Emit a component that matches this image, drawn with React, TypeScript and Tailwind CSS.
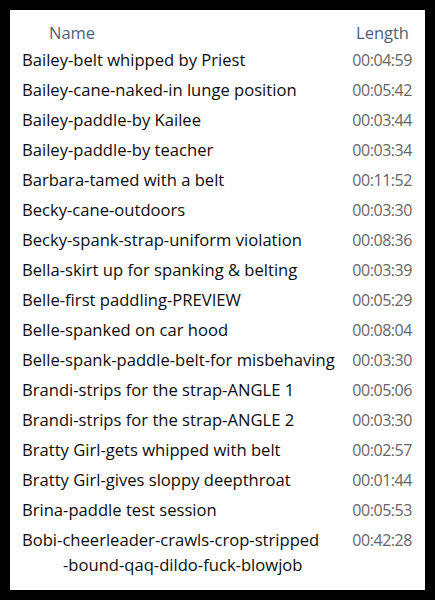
const ROWS: { name: string; cont?: string; length: string }[] = [
  { name: "Bailey-belt whipped by Priest", length: "00:04:59" },
  { name: "Bailey-cane-naked-in lunge position", length: "00:05:42" },
  { name: "Bailey-paddle-by Kailee", length: "00:03:44" },
  { name: "Bailey-paddle-by teacher", length: "00:03:34" },
  { name: "Barbara-tamed with a belt", length: "00:11:52" },
  { name: "Becky-cane-outdoors", length: "00:03:30" },
  { name: "Becky-spank-strap-uniform violation", length: "00:08:36" },
  { name: "Bella-skirt up for spanking & belting", length: "00:03:39" },
  { name: "Belle-first paddling-PREVIEW", length: "00:05:29" },
  { name: "Belle-spanked on car hood", length: "00:08:04" },
  { name: "Belle-spank-paddle-belt-for misbehaving", length: "00:03:30" },
  { name: "Brandi-strips for the strap-ANGLE 1", length: "00:05:06" },
  { name: "Brandi-strips for the strap-ANGLE 2", length: "00:03:30" },
  { name: "Bratty Girl-gets whipped with belt", length: "00:02:57" },
  { name: "Bratty Girl-gives sloppy deepthroat", length: "00:01:44" },
  { name: "Brina-paddle test session", length: "00:05:53" },
  {
    name: "Bobi-cheerleader-crawls-crop-stripped",
    cont: "-bound-qaq-dildo-fuck-blowjob",
    length: "00:42:28",
  },
];

export default function App() {
  return (
    <div className="h-[600px] w-[435px] bg-black p-[10px] font-['Open_Sans',sans-serif]">
      <div className="h-full w-full bg-white pl-[12px] pr-[12px] pt-[11px]">
        <div className="flex items-center justify-between text-[16.5px] leading-[24px] text-[#4d6079]">
          <span className="pl-[27px]">Name</span>
          <span className="pr-[4px]">Length</span>
        </div>
        <ul>
          {ROWS.map((row) => (
            <li key={row.name} className="flex justify-between leading-[30px]">
              <div className="text-[16.6px] text-[#0d0d0d]">
                <div>{row.name}</div>
                {row.cont && <div className="-mt-[1px] pl-[41px] leading-[22px]">{row.cont}</div>}
              </div>
              <span className="pr-[1px] text-[16px] tracking-[-0.45px] text-[#666]">{row.length}</span>
            </li>
          ))}
        </ul>
      </div>
    </div>
  );
}
